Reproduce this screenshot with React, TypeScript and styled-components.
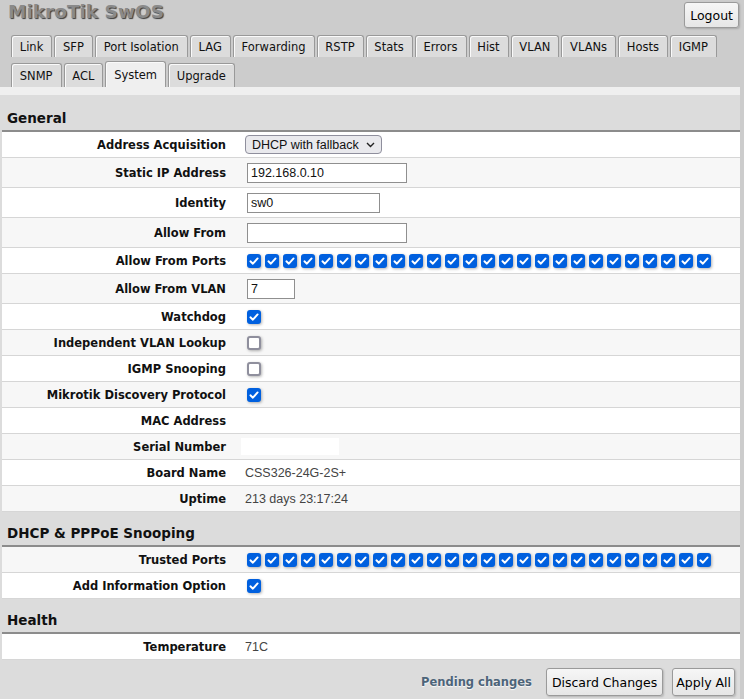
import React from "react";
import styled, { createGlobalStyle } from "styled-components";

const GlobalStyle = createGlobalStyle`
  html, body {
    margin: 0;
    padding: 0;
    background: #cccccc;
  }
  body {
    font-family: "DejaVu Sans", Verdana, sans-serif;
    color: #000;
  }
`;

const Page = styled.div`
  width: 744px;
  min-height: 699px;
  background: #cccccc;
`;

const Header = styled.div`
  height: 35px;
  display: flex;
  justify-content: space-between;
  align-items: flex-start;
  padding: 0 5px 0 8px;
  box-sizing: border-box;
`;

const Title = styled.div`
  font-size: 18.5px;
  font-weight: bold;
  line-height: 24px;
  color: #8a8a8a;
  text-shadow: 1px 1px 1px #3c3c3c;
`;

const Button = styled.button<{ $h?: number; $px?: number }>`
  font-family: "DejaVu Sans", Verdana, sans-serif;
  font-size: 12.5px;
  color: #000;
  height: ${(p) => p.$h ?? 28}px;
  padding: 0 ${(p) => p.$px ?? 5}px;
  background: linear-gradient(#f6f6f6, #e6e6e6);
  border: 1px solid #9a9a9a;
  border-radius: 3px;
  box-shadow: 1px 1px 2px rgba(0, 0, 0, 0.18);
  cursor: pointer;
`;

const LogoutButton = styled(Button)`
  margin-top: 2px;
`;

const TabRow = styled.div<{ $h: number; $mb?: number }>`
  display: flex;
  align-items: flex-end;
  gap: 2px;
  padding-left: 11px;
  height: ${(p) => p.$h}px;
  margin-bottom: ${(p) => p.$mb ?? 0}px;
`;

const Tab = styled.div<{ $active?: boolean; $h: number }>`
  height: ${(p) => (p.$active ? p.$h + 2 : p.$h)}px;
  padding: 0 8px 0 7.75px;
  display: flex;
  align-items: center;
  font-size: 11.5px;
  color: #111;
  background: ${(p) => (p.$active ? "#efefef" : "#dcdcdc")};
  border: 1px solid #999;
  border-bottom: none;
  border-radius: 3px 3px 0 0;
  box-shadow: inset 1px 1px 0 #fafafa;
  box-sizing: border-box;
`;

const Panel = styled.div`
  width: 740px;
  background: #dcdcdc;
`;

const Strip = styled.div`
  height: 8px;
  background: #efefef;
`;

const SectionTitle = styled.div<{ $first?: boolean }>`
  height: ${(p) => (p.$first ? 37 : 35)}px;
  box-sizing: border-box;
  padding: ${(p) => (p.$first ? 14 : 12)}px 5px 0;
  font-size: 13.5px;
  font-weight: bold;
  line-height: 18px;
  color: #111;
  border-bottom: 2px solid #8c8c8c;
  margin-left: 2px;
`;

const Rows = styled.div`
  margin-left: 2px;
`;

const Row = styled.div<{ $alt: boolean; $tall?: boolean }>`
  display: grid;
  grid-template-columns: 232px 1fr;
  align-items: center;
  height: ${(p) => (p.$tall ? 30 : 26)}px;
  box-sizing: border-box;
  background: ${(p) => (p.$alt ? "#f7f7f7" : "#ffffff")};
  border-bottom: 1px solid #d6d6d6;
`;

const Label = styled.div`
  text-align: right;
  padding-right: 8px;
  font-size: 11.5px;
  font-weight: bold;
  color: #111;
  white-space: nowrap;
`;

const Value = styled.div`
  padding-left: 11px;
  display: flex;
  align-items: center;
  font-family: "Liberation Sans", Arial, sans-serif;
  font-size: 12.5px;
  color: #444;
`;

const TextInput = styled.input<{ $w: number }>`
  width: ${(p) => p.$w}px;
  height: 20px;
  box-sizing: border-box;
  margin: 0 0 0 2px;
  padding: 0 3px;
  font-family: "Liberation Sans", Arial, sans-serif;
  font-size: 12.5px;
  color: #111;
  background: #fff;
  border: 1px solid #8f8f8f;
  border-radius: 0;
  outline: none;
`;

const SelectBox = styled.div`
  width: 137px;
  height: 19px;
  box-sizing: border-box;
  display: flex;
  align-items: center;
  justify-content: space-between;
  padding: 0 6px;
  font-family: "Liberation Sans", Arial, sans-serif;
  font-size: 12.5px;
  color: #111;
  background: #e9e9ed;
  border: 1px solid #8f8f9d;
  border-radius: 4px;
`;

const Boxes = styled.div`
  display: flex;
  gap: 4px;
  margin-left: 2px;
`;

const Box = styled.span<{ $on: boolean }>`
  width: 14px;
  height: 14px;
  box-sizing: border-box;
  display: inline-flex;
  align-items: center;
  justify-content: center;
  border-radius: 3px;
  background: ${(p) => (p.$on ? "#0060df" : "#ffffff")};
  border: ${(p) => (p.$on ? "none" : "2px solid #8f8f9d")};
  box-shadow: 1px 1px 3px rgba(0, 0, 0, 0.3);
`;

const Redacted = styled.div`
  width: 98px;
  height: 17px;
  margin-left: -4px;
  background: #ffffff;
`;

const Footer = styled.div`
  height: 40px;
  display: flex;
  justify-content: flex-end;
  align-items: flex-start;
  padding: 8px 5px 0 0;
  box-sizing: border-box;
  gap: 9px;
`;

const Pending = styled.div`
  font-size: 11.5px;
  font-weight: bold;
  color: #4d6479;
  text-shadow: 0 1px 1px rgba(255, 255, 255, 0.9);
  margin-right: 5px;
  line-height: 28px;
`;

const Check = ({ on }: { on: boolean }) => (
  <Box $on={on}>
    {on && (
      <svg width="10" height="10" viewBox="0 0 10 10">
        <path d="M1.4 5.3 L3.9 7.7 L8.6 2.4" fill="none" stroke="#fff" strokeWidth="1.9" strokeLinecap="round" strokeLinejoin="round" />
      </svg>
    )}
  </Box>
);

const Ports = () => (
  <Boxes>
    {Array.from({ length: 26 }, (_, i) => (
      <Check key={i} on />
    ))}
  </Boxes>
);

const tabs1 = ["Link", "SFP", "Port Isolation", "LAG", "Forwarding", "RSTP", "Stats", "Errors", "Hist", "VLAN", "VLANs", "Hosts", "IGMP"];
const tabs2 = ["SNMP", "ACL", "System", "Upgrade"];

type Item = { label: string; value: React.ReactNode; tall?: boolean };

const general: Item[] = [
  {
    label: "Address Acquisition",
    value: (
      <SelectBox>
        <span>DHCP with fallback</span>
        <svg width="9" height="6" viewBox="0 0 9 6">
          <path d="M1 1 L4.5 4.5 L8 1" fill="none" stroke="#222" strokeWidth="1.4" />
        </svg>
      </SelectBox>
    ),
  },
  { label: "Static IP Address", value: <TextInput $w={160} defaultValue="192.168.0.10" />, tall: true },
  { label: "Identity", value: <TextInput $w={133} defaultValue="sw0" />, tall: true },
  { label: "Allow From", value: <TextInput $w={160} defaultValue="" />, tall: true },
  { label: "Allow From Ports", value: <Ports /> },
  { label: "Allow From VLAN", value: <TextInput $w={48} defaultValue="7" />, tall: true },
  { label: "Watchdog", value: <Boxes><Check on /></Boxes> },
  { label: "Independent VLAN Lookup", value: <Boxes><Check on={false} /></Boxes> },
  { label: "IGMP Snooping", value: <Boxes><Check on={false} /></Boxes> },
  { label: "Mikrotik Discovery Protocol", value: <Boxes><Check on /></Boxes> },
  { label: "MAC Address", value: null },
  { label: "Serial Number", value: <Redacted /> },
  { label: "Board Name", value: "CSS326-24G-2S+" },
  { label: "Uptime", value: "213 days 23:17:24" },
];

const dhcp: Item[] = [
  { label: "Trusted Ports", value: <Ports /> },
  { label: "Add Information Option", value: <Boxes><Check on /></Boxes> },
];

const health: Item[] = [{ label: "Temperature", value: "71C" }];

const sections = [
  { title: "General", items: general },
  { title: "DHCP & PPPoE Snooping", items: dhcp },
  { title: "Health", items: health },
];

export default function App() {
  let n = 1;
  return (
    <Page>
      <GlobalStyle />
      <Header>
        <Title>MikroTik SwOS</Title>
        <LogoutButton $h={26}>Logout</LogoutButton>
      </Header>
      <TabRow $h={22} $mb={4}>
        {tabs1.map((t) => (
          <Tab key={t} $h={22}>{t}</Tab>
        ))}
      </TabRow>
      <TabRow $h={26}>
        {tabs2.map((t) => (
          <Tab key={t} $h={24} $active={t === "System"}>{t}</Tab>
        ))}
      </TabRow>
      <Panel>
        <Strip />
        {sections.map((s, si) => {
          n++;
          return (
            <React.Fragment key={s.title}>
              <SectionTitle $first={si === 0}>{s.title}</SectionTitle>
              <Rows>
                {s.items.map((it) => {
                  const idx = n++;
                  return (
                    <Row key={it.label} $alt={idx % 2 === 1} $tall={it.tall}>
                      <Label>{it.label}</Label>
                      <Value>{it.value}</Value>
                    </Row>
                  );
                })}
              </Rows>
            </React.Fragment>
          );
        })}
        <Footer>
          <Pending>Pending changes</Pending>
          <Button>Discard Changes</Button>
          <Button $px={3}>Apply All</Button>
        </Footer>
      </Panel>
    </Page>
  );
}
